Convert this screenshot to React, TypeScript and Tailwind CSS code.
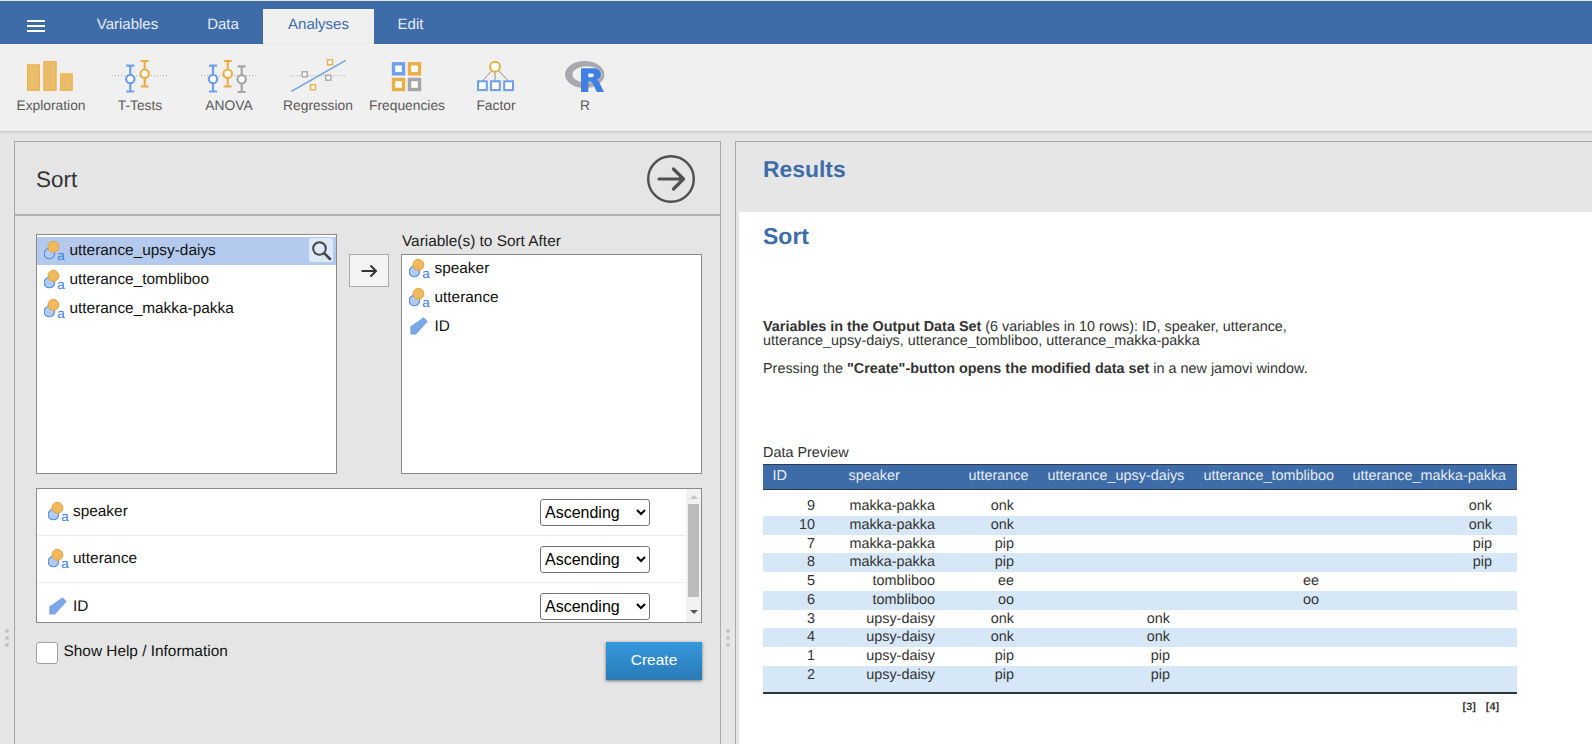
import React from "react";

const BLUE = "#6ea0ea";
const ORANGE = "#ecae44";
const GRAY = "#a6a6a6";

function ErrorBar({ x, y1, y2, cy, color }: { x: number; y1: number; y2: number; cy: number; color: string }) {
  return (
    <g stroke={color} strokeWidth="2.2" fill="none">
      <path d={`M${x - 4} ${y1}H${x + 4}M${x} ${y1}V${y2}M${x - 4} ${y2}H${x + 4}`} />
      <circle cx={x} cy={cy} r="4.2" fill="#fff" />
    </g>
  );
}

function Dotted({ x1, x2 }: { x1: number; x2: number }) {
  return <path d={`M${x1} 17.7H${x2}`} stroke="#aaa" strokeWidth="1" strokeDasharray="1 2" fill="none" />;
}

function Sq({ x, y, c, s = 5 }: { x: number; y: number; c: string; s?: number }) {
  return <rect x={x - s / 2} y={y - s / 2} width={s} height={s} fill="#fff" stroke={c} strokeWidth="1.4" />;
}

function FreqSq({ x, y, c }: { x: number; y: number; c: string }) {
  return <rect x={x + 1.5} y={y + 1.5} width="10" height="10" fill="#fff" stroke={c} strokeWidth="3.4" />;
}

const tools: { label: string; icon: React.ReactNode }[] = [
  {
    label: "Exploration",
    icon: (
      <g fill="#e9bc69" stroke="#eeb24a" strokeWidth="1">
        <rect x="20.5" y="6.8" width="12" height="25.6" />
        <rect x="36.8" y="3.5" width="12.4" height="28.9" />
        <rect x="53.5" y="15.8" width="11.8" height="16.6" />
      </g>
    ),
  },
  {
    label: "T-Tests",
    icon: (
      <>
        <Dotted x1={16} x2={71} />
        <ErrorBar x={34.3} y1={7.7} y2={33.5} cy={21} color={BLUE} />
        <ErrorBar x={48.7} y1={3} y2={28.5} cy={15.7} color={ORANGE} />
      </>
    ),
  },
  {
    label: "ANOVA",
    icon: (
      <>
        <Dotted x1={16} x2={71} />
        <ErrorBar x={28} y1={7.7} y2={33.5} cy={21} color={BLUE} />
        <ErrorBar x={42.7} y1={3} y2={28.5} cy={15.7} color={ORANGE} />
        <ErrorBar x={56.7} y1={8.3} y2={34} cy={21.3} color={GRAY} />
      </>
    ),
  },
  {
    label: "Regression",
    icon: (
      <>
        <Dotted x1={16.5} x2={72.5} />
        <path d="M17.3 33.3L71.7 2.3" stroke={BLUE} strokeWidth="1.5" fill="none" />
        <Sq x={30.7} y={16.3} c={GRAY} />
        <Sq x={56} y={4.3} c={ORANGE} />
        <Sq x={54.3} y={19.7} c={GRAY} />
        <Sq x={39} y={29.3} c={ORANGE} />
      </>
    ),
  },
  {
    label: "Frequencies",
    icon: (
      <>
        <FreqSq x={29} y={4.3} c={BLUE} />
        <FreqSq x={45} y={4.3} c={ORANGE} />
        <FreqSq x={29} y={20} c={ORANGE} />
        <FreqSq x={45} y={20} c={GRAY} />
      </>
    ),
  },
  {
    label: "Factor",
    icon: (
      <>
        <path d="M43 9L30.5 23M43 9V23M43 9L56.5 23" stroke="#8f8f8f" strokeWidth="1" fill="none" />
        <circle cx="43" cy="8.7" r="5" fill="#fff" stroke={ORANGE} strokeWidth="2" />
        <rect x="26" y="23.3" width="8.8" height="8.8" fill="#fff" stroke={BLUE} strokeWidth="2" />
        <rect x="39" y="23.3" width="8.8" height="8.8" fill="#fff" stroke={BLUE} strokeWidth="2" />
        <rect x="52.2" y="23.3" width="8.8" height="8.8" fill="#fff" stroke={BLUE} strokeWidth="2" />
      </>
    ),
  },
  {
    label: "R",
    icon: (
      <>
        <path
          fillRule="evenodd"
          d="M43.7 3C54.6 3 63.4 9 63.4 16.5S54.6 30 43.7 30 24 24 24 16.5 32.8 3 43.7 3ZM46 8.3C37.8 8.3 31.5 12 31.5 16.5S37.8 24.7 46 24.7 60.5 21 60.5 16.5 54.2 8.3 46 8.3Z"
          fill="#a9a9ad"
        />
        <path
          fillRule="evenodd"
          d="M40 10.3H52.5C57.5 10.3 60 13 60 16.6 60 19.4 58.4 21.2 55.9 22 57 22.5 57.7 23.4 58.3 24.5L63 34H55.8L51.7 25.6C51 24.2 50.3 23.7 49 23.7H47.3V34H40ZM47.3 15.4V19.3H50.6C52 19.3 52.9 18.6 52.9 17.3 52.9 16 52 15.4 50.6 15.4Z"
          fill="#3f80e2"
        />
      </>
    ),
  },
];

function NominalIcon() {
  return (
    <svg viewBox="0 -2 21 24" className="w-[21px] h-[24px] shrink-0">
      <circle cx="5.4" cy="12.6" r="5.2" fill="#b3cbf2" stroke="#4a8be3" strokeWidth="1.1" />
      <circle cx="9.4" cy="5.8" r="5.5" fill="#f0b95e" stroke="#dd9f3c" strokeWidth="0.9" />
      <text x="13.2" y="18.8" fontSize="13.5" fill="#3c82e4" fontFamily="'Liberation Sans', sans-serif">
        a
      </text>
    </svg>
  );
}

function IdIcon() {
  return (
    <svg viewBox="0 -2 21 24" className="w-[21px] h-[24px] shrink-0">
      <path d="M1.3 17.5V9.5L14.7 0.2 18.7 4.5 7 17.5Z" fill="#7ba6e8" />
    </svg>
  );
}

function ListRow({ name, id, selected }: { name: string; id?: boolean; selected?: boolean }) {
  return (
    <div
      className={`relative flex items-center pl-[7px] gap-[4.5px] ${
        selected ? "h-[28px] mb-px pb-px bg-[#b3c9ee]" : "h-[29px] pb-[2px]"
      }`}
    >
      {id ? <IdIcon /> : <NominalIcon />}
      <span className="text-[15.4px] text-[#111]">{name}</span>
      {selected && (
        <span className="absolute right-[3px] top-[1px] w-[24px] h-[24px] rounded-[2px] bg-[#dfe8f7] flex items-center justify-center">
          <svg viewBox="0 0 22 22" className="w-[22px] h-[22px]" fill="none" stroke="#444" strokeWidth="2">
            <circle cx="9.5" cy="9.5" r="6.3" />
            <path d="M14.2 14.2L20 20" strokeWidth="2.6" strokeLinecap="round" />
          </svg>
        </span>
      )}
    </div>
  );
}

function SortRow({ name, id, last }: { name: string; id?: boolean; last?: boolean }) {
  return (
    <div className={`flex items-center h-[47px] shrink-0 pl-[11px] pr-[51px] ${last ? "" : "border-b border-[#ececec]"}`}>
      <span className="w-[25px] shrink-0 flex">{id ? <IdIcon /> : <NominalIcon />}</span>
      <span className="flex-1 text-[15.4px] text-[#111]">{name}</span>
      <select className="w-[110px] h-[27px] border border-[#767676] rounded-[3px] bg-white text-[16px] text-black">
        <option>Ascending</option>
        <option>Descending</option>
      </select>
    </div>
  );
}

function Handle({ className }: { className: string }) {
  return (
    <div className={`absolute flex flex-col gap-[3px] ${className}`}>
      <span className="w-[4px] h-[4px] rounded-full bg-[#c4c4c4]" />
      <span className="w-[4px] h-[4px] rounded-full bg-[#c4c4c4]" />
      <span className="w-[4px] h-[4px] rounded-full bg-[#c4c4c4]" />
    </div>
  );
}

const headers = ["ID", "speaker", "utterance", "utterance_upsy-daiys", "utterance_tombliboo", "utterance_makka-pakka"];
const rows: [string, string, string, string, string, string][] = [
  ["9", "makka-pakka", "onk", "", "", "onk"],
  ["10", "makka-pakka", "onk", "", "", "onk"],
  ["7", "makka-pakka", "pip", "", "", "pip"],
  ["8", "makka-pakka", "pip", "", "", "pip"],
  ["5", "tombliboo", "ee", "", "ee", ""],
  ["6", "tombliboo", "oo", "", "oo", ""],
  ["3", "upsy-daisy", "onk", "onk", "", ""],
  ["4", "upsy-daisy", "onk", "onk", "", ""],
  ["1", "upsy-daisy", "pip", "pip", "", ""],
  ["2", "upsy-daisy", "pip", "pip", "", ""],
];
const cols = "grid grid-cols-[76px_120px_79px_156px_149px_174px]";

export default function App() {
  return (
    <div className="relative w-[1592px] h-[744px] overflow-hidden flex flex-col bg-[#e6e6e6] font-['Liberation_Sans',Arial,sans-serif] [text-rendering:geometricPrecision]">
      {/* tab bar */}
      <div className="h-[43px] mt-px shrink-0 bg-[#3e6ca8] flex items-end text-[15px] text-[#e6ecf5]">
        <div className="w-[72px] h-full flex items-center pl-[27px]">
          <div className="w-[18px] flex flex-col gap-[3px] mt-[6px]">
            <span className="h-[2px] bg-white" />
            <span className="h-[2px] bg-white" />
            <span className="h-[2px] bg-white" />
          </div>
        </div>
        <div className="h-[35px] w-[111px] flex items-center justify-center pb-[3px]">Variables</div>
        <div className="h-[35px] w-[80px] flex items-center justify-center pb-[3px]">Data</div>
        <div className="h-[35px] w-[111px] flex items-center justify-center pb-[3px] bg-[#f0f0f0] text-[#3e6ca8]">Analyses</div>
        <div className="h-[35px] w-[73px] flex items-center justify-center pb-[3px]">Edit</div>
      </div>

      {/* toolbar */}
      <div className="h-[87px] shrink-0 bg-[#f0f0f0] shadow-[0_1px_3px_rgba(0,0,0,0.18)] flex pl-[7px] pt-[14px] relative">
        {tools.map((t) => (
          <div key={t.label} className="w-[89px] flex flex-col items-center">
            <svg viewBox="0 0 89 36" className="w-[89px] h-[36px] shrink-0">
              {t.icon}
            </svg>
            <span className="mt-[4px] -ml-px text-[13.8px] leading-[16px] text-[#5a5a5a]">{t.label}</span>
          </div>
        ))}
      </div>

      {/* main */}
      <div className="relative flex-1 min-h-0 flex pt-[10px] pl-[14px]">
        {/* left panel */}
        <div className="w-[707px] h-[640px] shrink-0 border border-[#a8a8a8] bg-[#e5e5e5]">
          <div className="h-[74px] border-b-2 border-[#b0b0b0] flex items-center justify-between pl-[21px] pr-[25px]">
            <span className="text-[22.5px] text-[#333] mt-[4px]">Sort</span>
            <svg viewBox="0 0 48 48" className="w-[48px] h-[48px] mt-[2px]" fill="none" stroke="#505050">
              <circle cx="24" cy="24" r="22.8" strokeWidth="2.4" />
              <path d="M12 24H36M26.5 14L36.5 24 26.5 34" strokeWidth="3.2" strokeLinecap="round" strokeLinejoin="round" />
            </svg>
          </div>

          <div className="pl-[21px] pt-[18px] w-[687px]">
            <div className="flex items-start">
              <div className="w-[301px] h-[240px] border border-[#8a8a8a] bg-white pt-[2px]">
                <ListRow name="utterance_upsy-daiys" selected />
                <ListRow name="utterance_tombliboo" />
                <ListRow name="utterance_makka-pakka" />
              </div>
              <button className="ml-[12px] mt-[20px] w-[40px] h-[33px] border border-[#aaa] bg-[#f4f4f4] flex items-center justify-center">
                <svg viewBox="0 0 16 14" className="w-[16px] h-[14px]" fill="none" stroke="#333" strokeWidth="2">
                  <path d="M0.5 7H15M9.5 1.5L15 7l-5.5 5.5" />
                </svg>
              </button>
              <div className="ml-[12px] w-[301px] -mt-[1px]">
                <div className="h-[21px] text-[15.4px] leading-[16px] pt-[1px] pl-px text-[#222]">Variable(s) to Sort After</div>
                <div className="h-[220px] border border-[#8a8a8a] bg-white">
                  <ListRow name="speaker" />
                  <ListRow name="utterance" />
                  <ListRow name="ID" id />
                </div>
              </div>
            </div>

            <div className="relative mt-[14px] w-[666px] h-[135px] border border-[#8a8a8a] bg-white overflow-hidden flex flex-col">
              <SortRow name="speaker" />
              <SortRow name="utterance" />
              <SortRow name="ID" id last />
              <div className="absolute right-0 top-0 bottom-0 w-[15px] bg-[#f1f1f1] flex flex-col items-center">
                <span className="mt-[6px] border-x-[4px] border-x-transparent border-b-[4px] border-b-[#c4c4c4]" />
                <span className="mt-[5px] w-[11px] h-[93px] bg-[#bcbcbc]" />
                <span className="mt-[13px] border-x-[4px] border-x-transparent border-t-[4px] border-t-[#555]" />
              </div>
            </div>

            <div className="mt-[19px] flex items-start justify-between w-[666px]">
              <label className="flex items-start gap-[5.5px]">
                <span className="w-[22px] h-[22px] rounded-[3px] border-[1.5px] border-[#a0a0a0] bg-white" />
                <span className="mt-px text-[15.4px] leading-[18px] text-[#111]">Show Help / Information</span>
              </label>
              <button className="w-[96px] h-[38px] bg-gradient-to-b from-[#3498dc] to-[#2a7bb6] text-white text-[15.5px] shadow-[0_1px_3px_rgba(0,0,0,0.5)] pb-[2px]">
                Create
              </button>
            </div>
          </div>
        </div>

        <div className="w-[14px] shrink-0" />

        {/* results */}
        <div className="flex-1 h-[640px] border-l border-t border-[#a8a8a8] flex flex-col">
          <div className="h-[70px] shrink-0 pl-[27px] pt-[14px]">
            <span className="text-[22.9px] leading-[26px] font-bold text-[#3e6ca8]">Results</span>
          </div>
          <div className="ml-[3px] flex-1 bg-white pl-[24px] pt-[11px] text-[#333]">
            <div className="text-[23px] leading-[26px] font-bold text-[#3e6ca8]">Sort</div>
            <p className="mt-[71px] w-[560px] text-[14.4px] leading-[14px] text-[#333]">
              <b>Variables in the Output Data Set</b> (6 variables in 10 rows): ID, speaker, utterance, utterance_upsy-daiys, utterance_tombliboo, utterance_makka-pakka
            </p>
            <p className="mt-[13px] text-[14.4px] leading-[16px] text-[#333]">
              Pressing the <b>"Create"-button opens the modified data set</b> in a new jamovi window.
            </p>
            <div className="mt-[68px] text-[14.4px] leading-[16px] text-[#333]">Data Preview</div>
            <div className="mt-[3px] w-[754px] text-[14.4px] text-[#333]">
              <div className={`${cols} h-[26px] items-center bg-[#3e6ca8] border-y border-[#2b3a4d] text-[#e6ecf5]`}>
                {headers.map((h) => (
                  <span key={h} className="pl-[9.5px]">
                    {h}
                  </span>
                ))}
              </div>
              <div className="pt-[7px] border-b-2 border-[#333]">
                {rows.map((r, i) => (
                  <div
                    key={r[0]}
                    className={`${cols} ${i === rows.length - 1 ? "h-[26px]" : "h-[18.75px]"} leading-[19px] ${i % 2 === 1 ? "bg-[#d6e8f7]" : ""}`}
                  >
                    <span className="text-right pr-[24px]">{r[0]}</span>
                    <span className="text-right pr-[24px]">{r[1]}</span>
                    <span className="text-right pr-[24px]">{r[2]}</span>
                    <span className="text-right pr-[24px]">{r[3]}</span>
                    <span className="text-right pr-[24px]">{r[4]}</span>
                    <span className="text-right pr-[25px]">{r[5]}</span>
                  </div>
                ))}
              </div>
              <div className="flex justify-end gap-[10px] pr-[18px] pt-[7px] text-[10.8px] leading-[12px] font-bold text-[#333]">
                <span>[3]</span>
                <span>[4]</span>
              </div>
            </div>
          </div>
        </div>

        <Handle className="left-[5px] top-[498px]" />
        <Handle className="left-[726px] top-[498px]" />
      </div>
    </div>
  );
}
